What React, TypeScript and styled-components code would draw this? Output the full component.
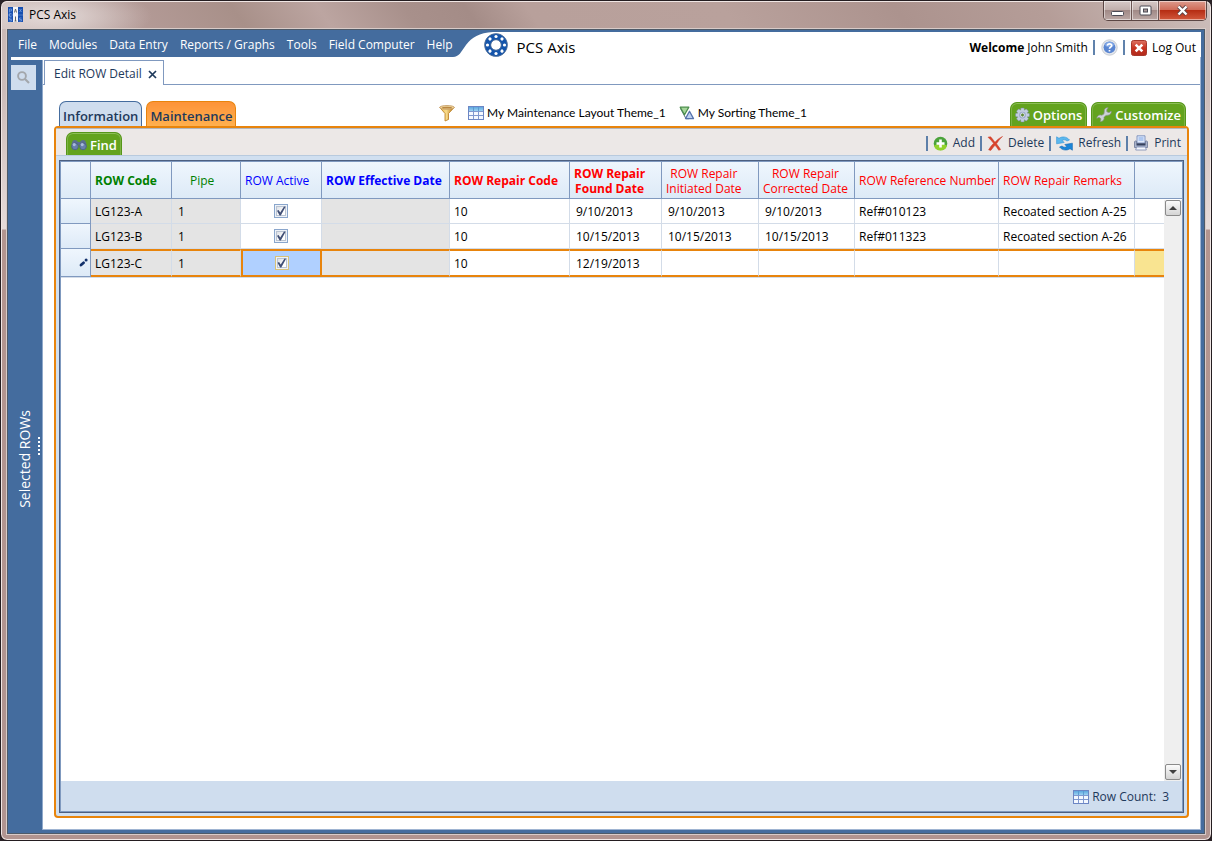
import React from "react";
import styled, { createGlobalStyle, css } from "styled-components";

const c = {
  blue: "#446c9e",
  line: "#8099bf",
  pale: "#cfddee",
  orange: "#e8840c",
  green: "#63a31e",
  ink: "#1e395b",
  cellLine: "#d3dce8",
};

const Global = createGlobalStyle`
  * { box-sizing: border-box; }
  body { margin: 0; background: #2a2226; font-family: "Open Sans", "Noto Sans", sans-serif; font-size: 12px; line-height: 16px; color: #000; }
  button { font: inherit; color: inherit; background: none; border: 0; padding: 0; margin: 0; cursor: pointer; }
  a { color: inherit; text-decoration: none; }
  svg { display: block; flex: none; }
`;

const Window = styled.div`
  min-height: 100vh;
  display: flex;
  flex-direction: column;
  padding: 0 6px 6px;
  border: 1px solid #241d20;
  border-radius: 7px;
  box-shadow: inset 0 0 0 1px #f0e6e4;
  background: linear-gradient(180deg, #c9b9b6 0, #cdbcb9 90px, #e6dbd9 228px, #b3958f 229px, #b09490 100%);
`;

const TitleBar = styled.header`
  display: flex;
  align-items: flex-start;
  height: 28px;
  margin: 0 -5px;
  padding: 5px 3px 0 6px;
  border-top: 1px solid #f0e6e4;
  border-radius: 6px 6px 0 0;
  background:
    radial-gradient(ellipse 100px 30px at 50px 14px, rgba(240, 234, 233, 0.75), rgba(240, 234, 233, 0) 100%),
    linear-gradient(55deg, #cbbbb8 0%, #b39a96 12%, #a89089 20%, #bca5a1 27%, #a8908b 34%, #a48c87 39%, #b8a09b 44%, #b9a19c 60%, #ac938e 74%, #b59d98 86%, #cdbfbc 100%);
`;

const AppName = styled.h1`
  flex: 1;
  margin: 0 0 0 6px;
  font-size: 12px;
  line-height: 16px;
  font-weight: 400;
`;

const WindowButtons = styled.div`
  display: flex;
  height: 20px;
  margin-top: -6px;
  border: 1px solid #5b4644;
  border-top: 0;
  border-radius: 0 0 5px 5px;
  overflow: hidden;
`;

const WindowButton = styled.button<{ $w: number; $close?: boolean }>`
  display: flex;
  align-items: center;
  justify-content: center;
  width: ${(p) => p.$w}px;
  border-right: ${(p) => (p.$close ? 0 : "1px solid #6b5553")};
  box-shadow: inset 0 0 0 1px rgba(255, 255, 255, 0.5);
  background: ${(p) =>
    p.$close
      ? "linear-gradient(#dd9b8d 0, #cf6a56 48%, #b62d14 50%, #d2593d 100%)"
      : "linear-gradient(#d6c9c7 0, #c0aeab 48%, #a18a87 50%, #bba8a5 100%)"};
`;

const Frame = styled.div`
  flex: 1;
  display: flex;
  flex-direction: column;
  border: 1px solid #4d5a68;
  box-shadow: 0 0 0 1px #d8cbc8;
  background: ${c.blue};
  padding: 2px 3px 3px 0;
`;

const TopBar = styled.div`
  display: flex;
  height: 25px;
  background: #fff;
`;

const Menu = styled.nav`
  display: flex;
  align-items: center;
  gap: 12px;
  padding: 0 0 0 10px;
  background: ${c.blue};
  color: #fff;
`;

const Brand = styled.div`
  display: flex;
  align-items: center;
  gap: 9px;
  margin-left: -9px;
  font-size: 15px;
  line-height: 20px;
  span { padding-top: 4px; }
`;

const UserArea = styled.div`
  flex: 1;
  display: flex;
  align-items: center;
  justify-content: flex-end;
  padding: 6px 5px 0 0;
  b { margin-right: 3px; }
`;

const Bar = styled.span`
  width: 2px;
  height: 15px;
  background: ${c.blue};
  opacity: 0.85;
`;

const UserBar = styled(Bar)`
  margin: 0 6px 0 5px;
`;

const UserLink = styled.a`
  display: flex;
  align-items: center;
  gap: 5px;
`;

const Body = styled.div`
  flex: 1;
  display: flex;
`;

const Side = styled.aside`
  width: 35px;
  display: flex;
  flex-direction: column;
  border-right: 1px solid #8fa9cb;
  color: #fff;
`;

const SideTop = styled.div`
  height: 3px;
  margin: 0 -1px 0 3px;
  background: #fff;
`;

const SearchButton = styled.button`
  display: flex;
  align-items: center;
  justify-content: center;
  width: 25px;
  height: 25px;
  margin: 5px 0 0 3px;
  background: ${c.pale};
`;

const SideLabel = styled.div`
  flex: 1;
  display: flex;
  align-items: center;
  justify-content: flex-end;
  gap: 3px;
  padding: 0 2px 0 0;
  margin-bottom: 2px;
`;

const VerticalText = styled.span`
  writing-mode: vertical-rl;
  transform: rotate(180deg);
  font-size: 14px;
  line-height: 20px;
`;

const Grip = styled.span`
  width: 2px;
  height: 18px;
  background: repeating-linear-gradient(#fff 0 2px, transparent 2px 4px);
  margin-bottom: 26px;
`;

const Content = styled.main`
  flex: 1;
  min-width: 0;
  display: flex;
  flex-direction: column;
  background: #fff;
  border-right: 1px solid #9fb4d2;
  border-bottom: 1px solid #9fb4d2;
`;

const DocTabs = styled.div`
  display: flex;
  height: 28px;
  padding: 3px 0 0 1px;
  border-bottom: 1px solid ${c.line};
`;

const DocTab = styled.div`
  display: flex;
  align-items: center;
  gap: 6px;
  height: 25px;
  padding: 2px 6px 0 9px;
  border: 1px solid ${c.line};
  border-bottom: 0;
  background: #fff;
  color: ${c.ink};
`;

const Page = styled.div`
  flex: 1;
  display: flex;
  flex-direction: column;
  padding: 16px 11px 11px;
`;

const PageTop = styled.div`
  display: flex;
  align-items: flex-end;
  padding: 0 3px 0 5px;
  height: 25px;
`;

const PageTab = styled.button<{ $active?: boolean }>`
  height: 25px;
  padding: 3px 3px 0;
  margin-right: 4px;
  border: 1px solid ${(p) => (p.$active ? c.orange : c.blue)};
  border-bottom: 0;
  border-radius: 7px 7px 0 0;
  background: ${(p) => (p.$active ? "linear-gradient(#fd9338, #ffb04f)" : c.pale)};
  color: ${c.ink};
  font-size: 13px;
  line-height: 20px;
  font-weight: 600;
`;

const Themes = styled.div`
  flex: 1;
  display: flex;
  align-items: center;
  justify-content: center;
  font-family: Lato, "Open Sans", sans-serif;
  height: 25px;
  padding-bottom: 1px;
`;

const Theme = styled.button`
  display: flex;
  align-items: center;
  gap: 3px;
  margin-left: 13px;
`;

const GreenTab = styled.button<{ $small?: boolean }>`
  display: flex;
  align-items: center;
  gap: 3px;
  height: 24px;
  padding: 1px 4px 0;
  margin-left: ${(p) => (p.$small ? 0 : 4)}px;
  border: 1px solid #56961a;
  border-bottom: 0;
  border-radius: 7px 7px 0 0;
  box-shadow: inset 0 1px 0 #8dbe58, inset 1px 0 0 #7db344, inset -1px 0 0 #7db344;
  background: ${c.green};
  color: #fff;
  font-size: 13px;
  line-height: 20px;
  font-weight: 600;
`;

const Panel = styled.section`
  flex: 1;
  display: flex;
  flex-direction: column;
  border: 2px solid ${c.orange};
  border-radius: 4px;
  background: #d0dff0;
  overflow: hidden;
`;

const Toolbar = styled.div`
  display: flex;
  align-items: flex-end;
  height: 28px;
  padding: 0 6px 0 10px;
  border-bottom: 1px solid #b8cade;
  border-top: 1px solid #b3b7bd;
  background: #ece8e7;
  color: ${c.ink};
  ${GreenTab} { height: 23px; }
`;

const Actions = styled.div`
  flex: 1;
  display: flex;
  align-items: center;
  justify-content: flex-end;
  height: 24px;
`;

const Action = styled.button`
  display: flex;
  align-items: center;
  gap: 5px;
  margin-left: 5px;
  &:not(:last-child) { margin-right: 5px; }
`;

const GridBox = styled.div`
  flex: 1;
  display: flex;
  flex-direction: column;
  margin: 4px 3px 3px;
  border: 1px solid #4c5f80;
  box-shadow: inset 0 0 0 1px #7f99bf;
  padding: 1px;
`;

const GridArea = styled.div`
  position: relative;
  flex: 1;
  background: #fff;
`;

const Table = styled.table`
  width: 100%;
  table-layout: fixed;
  border-collapse: separate;
  border-spacing: 0;
`;

const Col = styled.col<{ $w?: number }>`
  width: ${(p) => (p.$w ? p.$w + "px" : "auto")};
`;

const Th = styled.th<{ $color?: string; $bold?: boolean; $indent?: boolean; $last?: boolean }>`
  height: 37px;
  padding: 1px 0 0 ${(p) => (p.$indent ? 18 : 4)}px;
  border-right: ${(p) => (p.$last ? "0" : `1px solid ${c.line}`)};
  border-bottom: 1px solid ${c.line};
  background: linear-gradient(#eff6fd, #ddeaf7);
  color: ${(p) => p.$color};
  font-weight: ${(p) => (p.$bold ? 700 : 400)};
  text-align: left;
  line-height: 15px;
  white-space: nowrap;
  span { display: inline-block; text-align: center; }
`;

const Row = styled.tr<{ $current?: boolean }>`
  td { height: ${(p) => (p.$current ? 28 : 25)}px; }
  ${(p) =>
    p.$current &&
    css`
      box-shadow: 0 1px 0 ${c.cellLine};
      td { border-top: 2px solid ${c.orange}; border-bottom: 2px solid ${c.orange}; }
    `}
`;

const Td = styled.td<{ $grey?: boolean; $pad?: number }>`
  padding: 2px 0 0 ${(p) => p.$pad ?? 4}px;
  border-right: 1px solid ${c.cellLine};
  border-bottom: 1px solid ${c.cellLine};
  background: ${(p) => (p.$grey ? "#e4e4e4" : "#fff")};
  white-space: nowrap;
`;

const Selector = styled(Td)`
  &&& {
    padding: 0 2px 0 0;
    border-top: 0;
    border-right: 1px solid ${c.line};
    border-bottom: 1px solid ${c.line};
    background: linear-gradient(#eff6fd, #ddeaf7);
  }
  svg { margin-left: auto; }
`;

const CheckCell = styled(Td)<{ $current?: boolean }>`
  padding: 0;
  text-align: center;
  ${(p) =>
    p.$current &&
    css`
      background: #b0d0ff;
      &&& { border: 2px solid ${c.orange}; }
    `}
`;

const EndCell = styled(Td)<{ $current?: boolean }>`
  border-right: 0;
  ${(p) => p.$current && css`background: #f9e491;`}
`;

const Check = styled.input<{ $current?: boolean }>`
  appearance: none;
  display: block;
  position: relative;
  width: 14px;
  height: 14px;
  margin: 0 auto;
  border: 1px solid ${(p) => (p.$current ? "#d8c27a" : "#8aa6cc")};
  background: linear-gradient(135deg, #cfd3da, #fff 60%);
  box-shadow: inset 0 0 0 1px #eef2f8, inset 0 0 0 2px #b9c3d2;
  &:checked::after {
    content: "";
    position: absolute;
    inset: 1px;
    background: #414f76;
    clip-path: polygon(10% 48%, 26% 40%, 42% 64%, 80% 4%, 96% 8%, 48% 96%, 36% 96%);
  }
`;

const Scroll = styled.div`
  position: absolute;
  top: 38px;
  right: 0;
  bottom: 0;
  width: 18px;
  display: flex;
  flex-direction: column;
  justify-content: space-between;
  padding: 0 1px 1px;
  background: #efefef;
`;

const ScrollButton = styled.button`
  display: flex;
  align-items: center;
  justify-content: center;
  width: 16px;
  height: 16px;
  border: 1px solid #8a8a8a;
  border-radius: 2px;
  background: linear-gradient(#fbfbfb, #d4d4d4);
`;

const Footer = styled.footer`
  display: flex;
  align-items: center;
  justify-content: flex-end;
  gap: 3px;
  height: 30px;
  padding: 1px 13px 0 0;
  background: ${c.pale};
  color: ${c.ink};
  span { margin-left: 3px; }
`;

const WindowIcon = () => (
  <svg width="15" height="15" viewBox="0 0 15 15">
    <rect width="5" height="15" fill="#174fb0" />
    <rect x="5" width="5" height="15" fill="#f2f4f8" />
    <rect x="10" width="5" height="15" fill="#174fb0" />
    <g stroke="#6e9ae0" fill="none" opacity=".8">
      <path d="M1.500 5.500V2h2v2h-2M3.500 6.500h-2v3h2M3.500 11h-2v1.500h2V14h-2M11.500 2l2 3M13.500 2l-2 3M13.500 11h-2v1.500h2V14h-2" />
    </g>
    <path d="M6.500 5.500L7.500 2l1 3.500M7.500 9.500V14M6.500 14h2" stroke="#666" fill="none" />
    <path d="M0 8h15" stroke="#fff" opacity=".25" />
  </svg>
);

const Logo = () => (
  <svg width="24" height="24" viewBox="0 0 24 24">
    <circle cx="12" cy="12" r="8.300" fill="none" stroke="#1455ac" strokeWidth="6.400" />
    <circle cx="12" cy="12" r="11.400" fill="none" stroke="#5b7396" strokeWidth="0.800" />
    <circle cx="12" cy="12" r="5.300" fill="none" stroke="#5b7396" strokeWidth="0.800" />
    {[0, 45, 90, 135, 180, 225, 270, 315].map((a) => (
      <circle key={a} cx="12" cy="3.500" r="1.600" fill="#fff" transform={`rotate(${a} 12 12)`} />
    ))}
  </svg>
);

const Curve = () => (
  <svg width="40" height="25" viewBox="0 0 40 25">
    <path d="M0 0H40C26 1 19 5 13 13C8 20 6 25 0 25Z" fill={c.blue} />
  </svg>
);

const TableIcon = () => (
  <svg width="16" height="14" viewBox="0 0 16 14">
    <defs>
      <linearGradient id="thd" x2="0" y2="1"><stop stopColor="#5da7de" /><stop offset="1" stopColor="#9dd2f2" /></linearGradient>
    </defs>
    <rect x=".5" y=".5" width="15" height="13" fill="#f4f8ff" stroke="#6c86c4" />
    <rect x="1" y="1" width="14" height="4" fill="url(#thd)" />
    <path d="M1 5.500H15M1 9.500H15M5.500 1V13M10.500 1V13" stroke="#7f98cf" />
    <path d="M5.500 1V5M10.500 1V5" stroke="#5b9bd2" />
  </svg>
);

const Funnel = () => (
  <svg width="16" height="17" viewBox="0 0 16 17">
    <defs>
      <linearGradient id="fun"><stop stopColor="#eab848" /><stop offset=".45" stopColor="#f8dc8c" /><stop offset="1" stopColor="#b06a0a" /></linearGradient>
    </defs>
    <path d="M.8 2.500L6 8.500V16L9.500 14.500V8.500L15.200 2.500Z" fill="url(#fun)" stroke="#b97b1c" strokeWidth=".8" />
    <ellipse cx="8" cy="2.400" rx="7.300" ry="1.900" fill="#efd49b" stroke="#c39a62" strokeWidth=".8" />
    <ellipse cx="8" cy="2.700" rx="5" ry=".9" fill="#b98742" />
  </svg>
);

const SortIcon = () => (
  <svg width="16" height="14" viewBox="0 0 16 14">
    <path d="M1.500 2.500L7 12.700H10" stroke="#4f6f78" fill="none" />
    <path d="M1.200 1.200H9.800L5.500 8.800Z" fill="#a5d59a" stroke="#4c8f4c" strokeWidth="1.300" strokeLinejoin="round" />
    <path d="M6.500 12.600L10.500 5.300L14.500 12.600Z" fill="#bcd0f0" stroke="#5673ad" strokeWidth="1.300" strokeLinejoin="round" />
  </svg>
);

const Gear = () => (
  <svg width="15" height="16" viewBox="0 0 16 16">
    {[0, 45, 90, 135].map((a) => (
      <rect key={a} x="6.100" y=".6" width="3.800" height="14.800" rx=".8" fill="#c3cde0" stroke="#7888a8" strokeWidth=".5" transform={`rotate(${a} 8 8)`} />
    ))}
    <circle cx="8" cy="8" r="5.400" fill="#c3cde0" />
    <circle cx="8" cy="8" r="3.600" fill="#9aa8c8" />
    <circle cx="8" cy="8" r="2.100" fill="#5f8a3a" stroke="#e6ebf5" strokeWidth=".9" />
  </svg>
);

const Wrench = () => (
  <svg width="16" height="16" viewBox="0 0 16 16">
    <path d="M12.200 .8C9.900 .3 7.900 2 8.300 4.600L7.900 7L5.800 8.300C3.500 7.300 1 8.700.8 11.300L3 10.300L5 11.800L4.300 14.400C6.900 14.800 8.600 12.600 8 10.300L9.800 8.500L11.800 8.200C14.100 8.300 15.700 6.300 15.100 4.100L13 5.700L10.800 4.800L10.700 2.800Z" fill="#cdd2d6" stroke="#8b958c" strokeWidth=".7" />
  </svg>
);

const Binoculars = () => (
  <svg width="16" height="12" viewBox="0 0 16 12">
    <path d="M2 1.500C4 .3 6 1 7 3H9C10 1 12 .3 14 1.500C15.500 4 15.800 6 15.200 9H9V6H7V9H.8C.2 6 .5 4 2 1.500Z" fill="#5b6f8f" />
    <ellipse cx="4" cy="7.400" rx="3.300" ry="3.400" fill="#6880ad" stroke="#4a5e80" strokeWidth=".8" />
    <ellipse cx="12" cy="7.400" rx="3.300" ry="3.400" fill="#6880ad" stroke="#4a5e80" strokeWidth=".8" />
    <circle cx="3.200" cy="5.600" r="1.600" fill="#a9bbdc" />
    <circle cx="11.200" cy="5.600" r="1.600" fill="#a9bbdc" />
  </svg>
);

const AddIcon = () => (
  <svg width="15" height="15" viewBox="0 0 15 15">
    <circle cx="7.500" cy="7.500" r="6.800" fill="#4ba33b" />
    <path d="M1 9.500A6.700 6.700 0 0 0 14 9.500Q7.500 6 1 9.500" fill="#92d32c" />
    <path d="M7.500 3.500V11.500M3.500 7.500H11.500" stroke="#fff" strokeWidth="2.600" />
  </svg>
);

const DeleteIcon = () => (
  <svg width="16" height="15" viewBox="0 0 16 15">
    <path d="M1 1.200L3.600 .8C5.500 3 7 5 8 6.300C10 4 12.500 1.800 15.500 .5C13 2.800 11 5.200 9.500 7.800C11 9.800 12.300 11.500 13.600 13.600L11.700 14.200C10.500 12.300 9.300 10.700 8 9.200C6.500 11 5.200 12.500 3.800 14.400L1.600 13.800C3 11.500 4.700 9.200 6.600 7.300C4.800 5 3 3 1 1.200Z" fill="#d9432b" stroke="#cf4a36" strokeWidth=".6" />
  </svg>
);

const RefreshIcon = () => (
  <svg width="17" height="15" viewBox="0 0 17 15">
    <path d="M.6 .8L3 2.300C6 .2 10.500 .4 13.500 4L11 5C9.500 3.600 7.600 3.500 6.200 4.500L8.200 6.500L.6 7.800Z" fill="#5cb8ee" stroke="#2f93d6" strokeWidth=".6" />
    <path d="M16.400 14.200L14 12.700C11 14.800 6.500 14.600 3.500 11L6 10C7.500 11.400 9.400 11.500 10.800 10.500L8.800 8.500L16.400 7.200Z" fill="#1c86d8" stroke="#1568b4" strokeWidth=".6" />
  </svg>
);

const PrintIcon = () => (
  <svg width="16" height="16" viewBox="0 0 16 16">
    <path d="M4 .8H12V8H4Z" fill="#dfe9fb" stroke="#6c83b5" strokeWidth=".8" />
    <path d="M5.500 3H10.500M5.500 5H10.500" stroke="#7fa6e6" />
    <path d="M1.500 7C1.500 6 2.500 5.800 3.500 6V8.500H12.500V6C13.500 5.800 14.500 6 14.500 7V12.500H1.500Z" fill="#a9b3cc" stroke="#6c7797" strokeWidth=".8" />
    <path d="M3.500 8.500H12.500V10.500H3.500Z" fill="#34415f" />
    <path d="M3.500 12H12.500L13.300 15H2.700Z" fill="#f5f8ff" stroke="#7888b0" strokeWidth=".8" />
  </svg>
);

const HelpIcon = () => (
  <svg width="17" height="17" viewBox="0 0 17 17">
    <circle cx="8.500" cy="8.500" r="7.700" fill="#e4e7ec" stroke="#c9cdd4" />
    <circle cx="8.500" cy="8.300" r="5.900" fill="#5a86d2" />
    <ellipse cx="8.500" cy="5.500" rx="4.500" ry="2.700" fill="#7fa5e4" />
    <path d="M6.300 6.600C6.500 4.200 10.700 4.200 10.700 6.600C10.700 8.200 8.500 8 8.500 9.800M8.500 10.900V12.600" stroke="#fff" strokeWidth="1.700" fill="none" />
  </svg>
);

const LogOutIcon = () => (
  <svg width="16" height="16" viewBox="0 0 16 16">
    <defs>
      <linearGradient id="out" x2="0" y2="1"><stop stopColor="#dd7464" /><stop offset=".5" stopColor="#c93421" /><stop offset="1" stopColor="#b02a1c" /></linearGradient>
    </defs>
    <rect x=".5" y=".5" width="15" height="15" rx="2" fill="url(#out)" stroke="#a8382c" />
    <path d="M4.700 4.700L11.300 11.300M11.300 4.700L4.700 11.300" stroke="#fff" strokeWidth="2.600" />
  </svg>
);

const SearchIcon = () => (
  <svg width="13" height="13" viewBox="0 0 13 13">
    <circle cx="5" cy="5" r="3.900" fill="none" stroke="#a3a7ac" strokeWidth="1.900" />
    <path d="M8 8L12 12" stroke="#a3a7ac" strokeWidth="2.200" />
  </svg>
);

const CloseX = () => (
  <svg width="9" height="9" viewBox="0 0 9 9">
    <path d="M1 1L8 8M8 1L1 8" stroke={c.ink} strokeWidth="1.700" />
  </svg>
);

const Pencil = () => (
  <svg width="9" height="9" viewBox="0 0 9 9">
    <path d="M2 7L4.600 4.800" stroke="#13316b" strokeWidth="2.800" strokeLinecap="round" />
    <circle cx="7.100" cy="2" r="1.500" fill="#13316b" />
  </svg>
);

const Arrow = ({ down }: { down?: boolean }) => (
  <svg width="8" height="4" viewBox="0 0 8 4">
    <path d={down ? "M0 0H8L4 4Z" : "M0 4H8L4 0Z"} fill="#404040" />
  </svg>
);

const columns = [
  { w: 81, label: ["ROW Code"], color: "#008000", bold: true },
  { w: 69, label: ["Pipe"], color: "#008000", indent: true },
  { w: 81, label: ["ROW Active"], color: "#00f" },
  { w: 128, label: ["ROW Effective Date"], color: "#00f", bold: true },
  { w: 120, label: ["ROW Repair Code"], color: "#f00", bold: true },
  { w: 92, label: ["ROW Repair", "Found Date"], color: "#f00", bold: true },
  { w: 97, label: ["ROW Repair", "Initiated Date"], color: "#f00" },
  { w: 96, label: ["ROW Repair", "Corrected Date"], color: "#f00" },
  { w: 144, label: ["ROW Reference Number"], color: "#f00" },
  { w: 136, label: ["ROW Repair Remarks"], color: "#f00" },
];

const rows = [
  { code: "LG123-A", found: "9/10/2013", started: "9/10/2013", fixed: "9/10/2013", ref: "Ref#010123", remarks: "Recoated section A-25" },
  { code: "LG123-B", found: "10/15/2013", started: "10/15/2013", fixed: "10/15/2013", ref: "Ref#011323", remarks: "Recoated section A-26" },
  { code: "LG123-C", found: "12/19/2013", started: "", fixed: "", ref: "", remarks: "", current: true },
];

const menus = ["File", "Modules", "Data Entry", "Reports / Graphs", "Tools", "Field Computer", "Help"];

const actions = [
  { label: "Add", icon: <AddIcon /> },
  { label: "Delete", icon: <DeleteIcon /> },
  { label: "Refresh", icon: <RefreshIcon /> },
  { label: "Print", icon: <PrintIcon /> },
];

export default function App() {
  return (
    <>
      <Global />
      <Window>
        <TitleBar>
          <WindowIcon />
          <AppName>PCS Axis</AppName>
          <WindowButtons>
            <WindowButton $w={28} aria-label="Minimize">
              <svg width="13" height="12"><rect x=".5" y="6.500" width="12" height="4" rx="1" fill="#fff" stroke="#4a4a55" /></svg>
            </WindowButton>
            <WindowButton $w={27} aria-label="Maximize">
              <svg width="13" height="11"><rect x="1" y="1" width="11" height="9" rx="1" fill="#fff" stroke="#4a4a55" /><rect x="4.500" y="4" width="4" height="3" fill="#a99" stroke="#4a4a55" /></svg>
            </WindowButton>
            <WindowButton $w={47} $close aria-label="Close">
              <svg width="13" height="11"><path d="M2.500 1.500L10.500 9.500M10.500 1.500L2.500 9.500" stroke="#5a4346" strokeWidth="4" /><path d="M2.500 1.500L10.500 9.500M10.500 1.500L2.500 9.500" stroke="#fff" strokeWidth="2.400" /></svg>
            </WindowButton>
          </WindowButtons>
        </TitleBar>
        <Frame>
          <TopBar>
            <Menu>
              {menus.map((m) => (
                <a href="#" key={m}>{m}</a>
              ))}
            </Menu>
            <Curve />
            <Brand>
              <Logo />
              <span>PCS Axis</span>
            </Brand>
            <UserArea>
              <b>Welcome</b> John Smith
              <UserBar />
              <UserLink href="#" aria-label="Help"><HelpIcon /></UserLink>
              <UserBar />
              <UserLink href="#"><LogOutIcon />Log Out</UserLink>
            </UserArea>
          </TopBar>
          <Body>
            <Side>
              <SideTop />
              <SearchButton aria-label="Search"><SearchIcon /></SearchButton>
              <SideLabel>
                <VerticalText>Selected ROWs</VerticalText>
                <Grip />
              </SideLabel>
            </Side>
            <Content>
              <DocTabs>
                <DocTab>
                  Edit ROW Detail
                  <button aria-label="Close tab"><CloseX /></button>
                </DocTab>
              </DocTabs>
              <Page>
                <PageTop>
                  <PageTab>Information</PageTab>
                  <PageTab $active>Maintenance</PageTab>
                  <Themes>
                    <button aria-label="Filter"><Funnel /></button>
                    <Theme><TableIcon />My Maintenance Layout Theme_1</Theme>
                    <Theme><SortIcon />My Sorting Theme_1</Theme>
                  </Themes>
                  <GreenTab><Gear />Options</GreenTab>
                  <GreenTab><Wrench />Customize</GreenTab>
                </PageTop>
                <Panel>
                  <Toolbar>
                    <GreenTab $small><Binoculars />Find</GreenTab>
                    <Actions>
                      {actions.map((a) => (
                        <React.Fragment key={a.label}>
                          <Bar />
                          <Action>{a.icon}{a.label}</Action>
                        </React.Fragment>
                      ))}
                    </Actions>
                  </Toolbar>
                  <GridBox>
                    <GridArea>
                      <Table>
                        <colgroup>
                          <Col $w={30} />
                          {columns.map((k) => <Col key={k.label.join()} $w={k.w} />)}
                          <Col />
                        </colgroup>
                        <thead>
                          <tr>
                            <Th />
                            {columns.map((k) => (
                              <Th key={k.label.join()} $color={k.color} $bold={k.bold} $indent={k.indent}>
                                <span>{k.label[0]}{k.label[1] && <><br />{k.label[1]}</>}</span>
                              </Th>
                            ))}
                            <Th $last />
                          </tr>
                        </thead>
                        <tbody>
                          {rows.map((r) => (
                            <Row key={r.code} $current={r.current}>
                              <Selector>{r.current && <Pencil />}</Selector>
                              <Td $grey>{r.code}</Td>
                              <Td $grey $pad={6}>1</Td>
                              <CheckCell $current={r.current}>
                                <Check type="checkbox" defaultChecked $current={r.current} aria-label={`${r.code} active`} />
                              </CheckCell>
                              <Td $grey />
                              <Td>10</Td>
                              <Td $pad={6}>{r.found}</Td>
                              <Td $pad={6}>{r.started}</Td>
                              <Td $pad={6}>{r.fixed}</Td>
                              <Td>{r.ref}</Td>
                              <Td>{r.remarks}</Td>
                              <EndCell $current={r.current} />
                            </Row>
                          ))}
                        </tbody>
                      </Table>
                      <Scroll>
                        <ScrollButton aria-label="Scroll up"><Arrow /></ScrollButton>
                        <ScrollButton aria-label="Scroll down"><Arrow down /></ScrollButton>
                      </Scroll>
                    </GridArea>
                    <Footer><TableIcon />Row Count: <span>3</span></Footer>
                  </GridBox>
                </Panel>
              </Page>
            </Content>
          </Body>
        </Frame>
      </Window>
    </>
  );
}
